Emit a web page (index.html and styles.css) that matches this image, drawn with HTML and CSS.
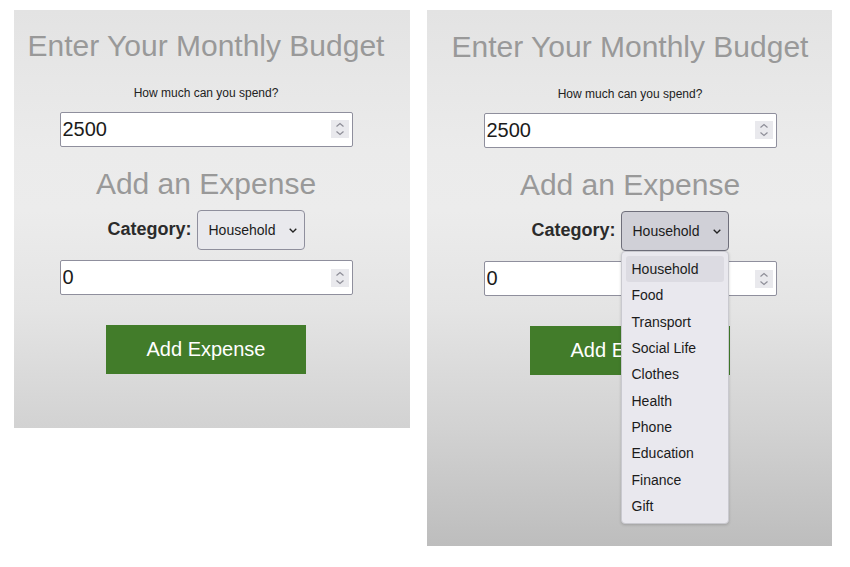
FILE: index.html
```html
<!DOCTYPE html>
<html lang="en">
<head>
<meta charset="utf-8">
<title>Monthly Budget</title>
<link rel="stylesheet" href="styles.css">
</head>
<body>
<div class="stage">
  <section class="panel panel-left">
    <h1 class="title">Enter Your Monthly Budget</h1>
    <p class="hint">How much can you spend?</p>
    <div class="field">
      <input class="field-input" type="text" value="2500">
      <span class="spin">
        <svg width="18" height="18" viewBox="0 0 18 18"><path d="M5.5 6.5 L9 3.5 L12.5 6.5" fill="none" stroke="#8d8d97" stroke-width="1.2"/><path d="M5.5 11.5 L9 14.5 L12.5 11.5" fill="none" stroke="#8d8d97" stroke-width="1.2"/></svg>
      </span>
    </div>
    <h2 class="title title-sub">Add an Expense</h2>
    <div class="cat-row">
      <label class="cat-label">Category:</label>
      <div class="select">
        <span class="select-text">Household</span>
        <svg class="chev" width="8" height="5" viewBox="0 0 8 5"><path d="M0.7 0.7 L4 4 L7.3 0.7" fill="none" stroke="#222" stroke-width="1.3"/></svg>
      </div>
    </div>
    <div class="field field-amount">
      <input class="field-input" type="text" value="0">
      <span class="spin">
        <svg width="18" height="18" viewBox="0 0 18 18"><path d="M5.5 6.5 L9 3.5 L12.5 6.5" fill="none" stroke="#8d8d97" stroke-width="1.2"/><path d="M5.5 11.5 L9 14.5 L12.5 11.5" fill="none" stroke="#8d8d97" stroke-width="1.2"/></svg>
      </span>
    </div>
    <button class="add-btn" type="button">Add Expense</button>
  </section>

  <section class="panel panel-right">
    <h1 class="title">Enter Your Monthly Budget</h1>
    <p class="hint">How much can you spend?</p>
    <div class="field">
      <input class="field-input" type="text" value="2500">
      <span class="spin">
        <svg width="18" height="18" viewBox="0 0 18 18"><path d="M5.5 6.5 L9 3.5 L12.5 6.5" fill="none" stroke="#8d8d97" stroke-width="1.2"/><path d="M5.5 11.5 L9 14.5 L12.5 11.5" fill="none" stroke="#8d8d97" stroke-width="1.2"/></svg>
      </span>
    </div>
    <h2 class="title title-sub">Add an Expense</h2>
    <div class="cat-row">
      <label class="cat-label">Category:</label>
      <div class="select select-open">
        <span class="select-text">Household</span>
        <svg class="chev" width="8" height="5" viewBox="0 0 8 5"><path d="M0.7 0.7 L4 4 L7.3 0.7" fill="none" stroke="#222" stroke-width="1.3"/></svg>
        <ul class="dropdown">
          <li class="opt opt-active">Household</li>
          <li class="opt">Food</li>
          <li class="opt">Transport</li>
          <li class="opt">Social Life</li>
          <li class="opt">Clothes</li>
          <li class="opt">Health</li>
          <li class="opt">Phone</li>
          <li class="opt">Education</li>
          <li class="opt">Finance</li>
          <li class="opt">Gift</li>
        </ul>
      </div>
    </div>
    <div class="field field-amount">
      <input class="field-input" type="text" value="0">
      <span class="spin">
        <svg width="18" height="18" viewBox="0 0 18 18"><path d="M5.5 6.5 L9 3.5 L12.5 6.5" fill="none" stroke="#8d8d97" stroke-width="1.2"/><path d="M5.5 11.5 L9 14.5 L12.5 11.5" fill="none" stroke="#8d8d97" stroke-width="1.2"/></svg>
      </span>
    </div>
    <button class="add-btn" type="button">Add Expense</button>
  </section>
</div>
</body>
</html>
```

FILE: styles.css
```css
* {
  box-sizing: border-box;
}

html, body {
  margin: 0;
  padding: 0;
  background: #ffffff;
}

body {
  font-family: "Liberation Sans", Arial, sans-serif;
  color: #222;
}

.stage {
  display: flex;
  align-items: flex-start;
  gap: 17px;
  padding: 10px 0 0 14px;
}

.panel {
  display: flex;
  flex-direction: column;
  align-items: center;
  background: linear-gradient(to bottom,
    #e3e3e3 0px,
    #ebebeb 140px,
    #ececec 200px,
    #e4e4e4 300px,
    #d2d2d2 418px,
    #bdbdbd 536px);
}

.panel-left {
  width: 396px;
  height: 418px;
  padding: 19px 12px 0 0;
}

.panel-right {
  width: 405px;
  height: 536px;
  padding: 20px 0 0 1px;
}

.title {
  margin: 0;
  font-size: 30px;
  font-weight: normal;
  line-height: 34.5px;
  color: #999999;
}

.hint {
  margin: 22px 0 0;
  font-size: 12px;
  line-height: 14px;
  color: #222;
}

.field {
  display: flex;
  align-items: center;
  width: 293px;
  height: 35px;
  margin-top: 12px;
  background: #ffffff;
  border: 1px solid #8f8f9d;
  border-radius: 2px;
  padding: 0 3px 0 2px;
}

.field-input {
  flex: 1;
  min-width: 0;
  border: none;
  outline: none;
  background: transparent;
  padding: 0;
  font-family: "Liberation Sans", Arial, sans-serif;
  font-size: 20px;
  color: #1b1b1b;
}

.spin {
  display: flex;
  width: 18px;
  height: 18px;
  background: #e9e9ed;
}

.title-sub {
  margin-top: 20px;
}

.cat-row {
  display: flex;
  align-items: baseline;
  gap: 5px;
  margin-top: 9px;
}

.cat-label {
  font-size: 18px;
  font-weight: bold;
  color: #2b2b2b;
}

.select {
  position: relative;
  display: flex;
  align-items: center;
  width: 108px;
  height: 40px;
  padding: 0 7px 0 11px;
  background: #e9e9ed;
  border: 1px solid #8f8f9d;
  border-radius: 4px;
}

.select-open {
  background: #d0d0d7;
  border-color: #6f6f7b;
}

.select-text {
  flex: 1;
  font-size: 14px;
  color: #1b1b1b;
}

.chev {
  display: block;
}

.field-amount {
  margin-top: 10px;
}

.add-btn {
  margin-top: 30px;
  width: 200px;
  height: 49px;
  border: none;
  background: #427c2a;
  color: #ffffff;
  font-family: "Liberation Sans", Arial, sans-serif;
  font-size: 20px;
  padding: 0;
}

.dropdown {
  position: absolute;
  top: calc(100% + 1px);
  left: -1px;
  width: 108px;
  margin: 0;
  padding: 4px;
  list-style: none;
  background: #e9e8ee;
  border: 1px solid #c9c9cf;
  border-radius: 4px;
  box-shadow: 0 1px 3px rgba(0, 0, 0, 0.18);
  z-index: 5;
}

.opt {
  height: 26.33px;
  line-height: 26.33px;
  padding-left: 6px;
  font-size: 14px;
  color: #1b1b1b;
  border-radius: 3px;
  white-space: nowrap;
}

.opt-active {
  background: #dcdbe2;
}
```
